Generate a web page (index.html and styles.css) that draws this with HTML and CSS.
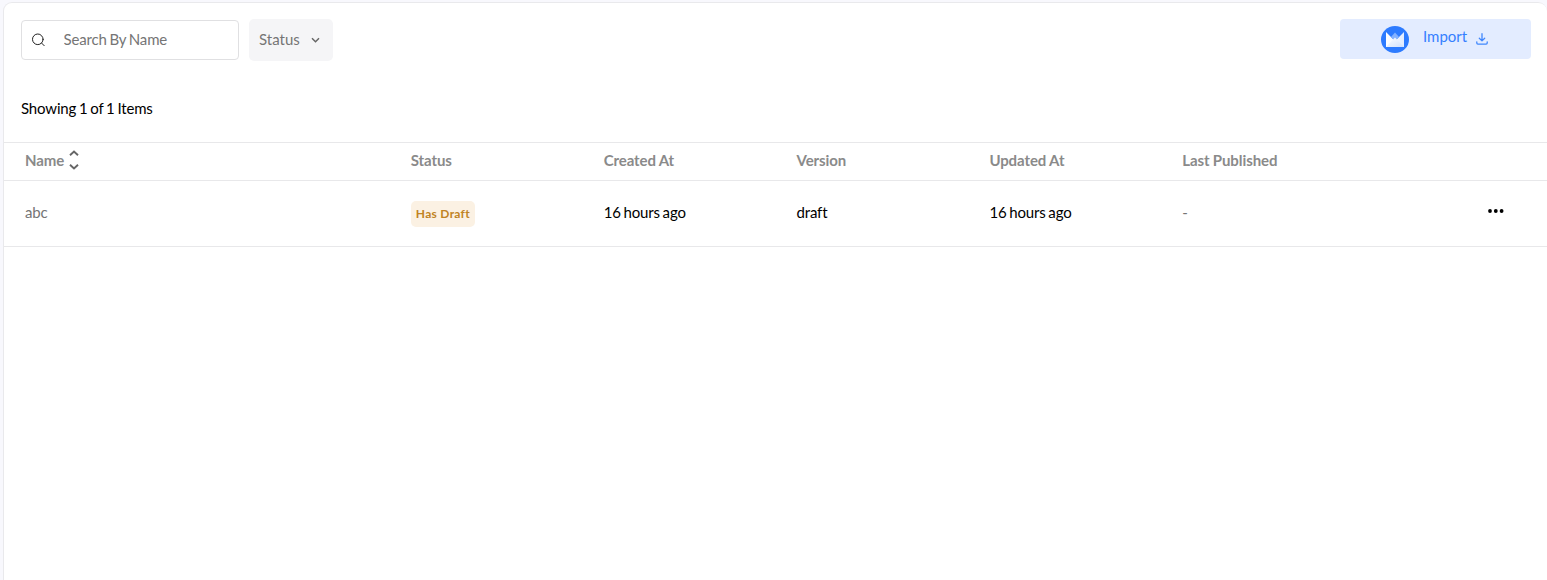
FILE: index.html
```html
<!DOCTYPE html>
<html lang="en">
<head>
<meta charset="utf-8">
<title>Items</title>
<link rel="stylesheet" href="styles.css">
</head>
<body>
<main class="card">
  <div class="toolbar">
    <label class="search">
      <svg class="search-icon" width="14" height="14" viewBox="0 0 14 14" fill="none" stroke="#222" stroke-width="1" stroke-linecap="round"><circle cx="6.800" cy="6.300" r="5.300"/><path d="M10.700 10.200 13.200 12.700"/></svg>
      <input class="search-input" type="text" placeholder="Search By Name">
    </label>
    <button class="filter"><span class="filter-label">Status</span>
      <svg width="9" height="6" viewBox="0 0 9 6" fill="none" stroke="#666" stroke-width="1.500"><path d="M1 1.300 4.500 4.800 8 1.300"/></svg>
    </button>
    <button class="import">
      <svg class="import-logo" width="28" height="28" viewBox="0 0 28 28">
        <defs>
          <linearGradient id="fold" x1="0" y1="0" x2="1" y2="0"><stop offset="0" stop-color="#fff"/><stop offset="1" stop-color="#e2ecff"/></linearGradient>
          <linearGradient id="base" x1="0" y1="0" x2="1" y2="1"><stop offset="0" stop-color="#fff"/><stop offset="1" stop-color="#cfe0fd"/></linearGradient>
        </defs>
        <ellipse cx="14" cy="14.500" rx="14" ry="13.500" fill="#2d7bff"/>
        <path d="M5 7 14 16 23 7V22H5z" fill="url(#fold)"/>
        <path d="M10 12 14 7.500l4 4.500-4 4z" fill="#84b2ff"/>
        <path d="M5 22 14 12.500l9 9.500z" fill="url(#base)"/>
      </svg>
      <span class="import-label">Import</span>
      <svg class="import-icon" width="12" height="12" viewBox="0 0 12 12" fill="none" stroke="#4087fd" stroke-width="1.300" stroke-linecap="round" stroke-linejoin="round"><path d="M6 .7v7M3.300 5.200 6 7.900l2.700-2.700M.8 8.800v1.300q0 1.100 1.100 1.100h8.200q1.100 0 1.100-1.100V8.800"/></svg>
    </button>
  </div>
  <p class="count">Showing 1 of 1 Items</p>
  <div class="row head">
    <div class="cell name-head">Name
      <svg class="sort-icon" width="10" height="20" viewBox="0 0 10 20" fill="none" stroke="#666" stroke-width="1.900"><path d="M1 5.200 5 1.500 9 5.200M1 14.800 5 18.500 9 14.800"/></svg>
    </div>
    <div class="cell">Status</div>
    <div class="cell">Created At</div>
    <div class="cell">Version</div>
    <div class="cell">Updated At</div>
    <div class="cell">Last Published</div>
    <div class="cell"></div>
  </div>
  <div class="row item">
    <div class="cell muted">abc</div>
    <div class="cell badge-cell"><span class="badge">Has Draft</span></div>
    <div class="cell">16 hours ago</div>
    <div class="cell">draft</div>
    <div class="cell">16 hours ago</div>
    <div class="cell muted">-</div>
    <div class="cell actions"><svg width="16" height="4" viewBox="0 0 16 4"><circle cx="2" cy="2" r="1.900"/><circle cx="7.800" cy="2" r="1.900"/><circle cx="13.600" cy="2" r="1.900"/></svg></div>
  </div>
</main>
</body>
</html>
```
FILE: styles.css
```css
* { box-sizing: border-box; }
body {
  margin: 0;
  padding: 2px 0 0 3px;
  height: 580px;
  overflow: hidden;
  background: #f8f8fd;
  font: 15px/20px Lato, sans-serif;
  word-spacing: -.9px;
  letter-spacing: -.16px;
  color: #000;
}
.card {
  height: 600px;
  background: #fff;
  border: 1px solid #e9e9ec;
  border-right: 0;
  border-radius: 9px 9px 0 0;
}
.toolbar {
  display: flex;
  align-items: flex-start;
  padding: 16px 16px 0 17px;
  height: 91px;
}
.search {
  display: flex;
  align-items: center;
  width: 218px;
  height: 40px;
  margin-top: 1px;
  padding-left: 9px;
  border: 1px solid #e0e0e2;
  border-radius: 4px;
}
.search-input {
  width: 160px;
  margin-left: 18.500px;
  padding: 0 0 2px;
  border: 0;
  outline: 0;
  font: inherit;
  word-spacing: inherit;
  letter-spacing: inherit;
  background: none;
}
.search-input::placeholder { color: #757575; }
.filter, .import {
  display: flex;
  align-items: center;
  border: 0;
  font: inherit;
}
.filter {
  gap: 11px;
  width: 84px;
  height: 42px;
  margin-left: 10px;
  padding: 0 0 0 10px;
  border-radius: 5px;
  background: #f5f5f7;
  color: #757575;
}
.filter-label { padding-bottom: 2px; }
.import {
  width: 191px;
  height: 40px;
  margin-left: auto;
  padding: 0 0 0 41px;
  border-radius: 4px;
  background: #e3ecff;
  color: #3580ff;
}
.import-label { margin: -6px 9px 0 14px; }
.count { margin: 4px 0 24px 17px; }
.row {
  display: grid;
  grid-template-columns: 2fr repeat(6, 1fr);
  align-items: center;
  border-bottom: 1px solid #e8e8ea;
}
.cell { padding: 0 0 4px 21px; }
.head {
  height: 39px;
  border-top: 1px solid #e8e8ea;
  font-weight: 700;
  word-spacing: -.3px;
  letter-spacing: -.08px;
  color: #8a8a8a;
}
.name-head { display: flex; align-items: center; gap: 5px; }
.sort-icon { margin-bottom: -1px; }
.item { height: 66px; }
.muted { color: #757575; }
.badge-cell { padding-bottom: 0; }
.badge {
  display: block;
  width: 64px;
  height: 26px;
  padding-left: 5px;
  border-radius: 5px;
  background: #fbf1e3;
  color: #c08323;
  font-size: 12px;
  line-height: 26px;
  font-weight: 700;
  letter-spacing: .3px;
  word-spacing: 0;
  white-space: nowrap;
}
.actions { display: flex; justify-content: flex-end; padding: 0 43px 6px 0; }
```
